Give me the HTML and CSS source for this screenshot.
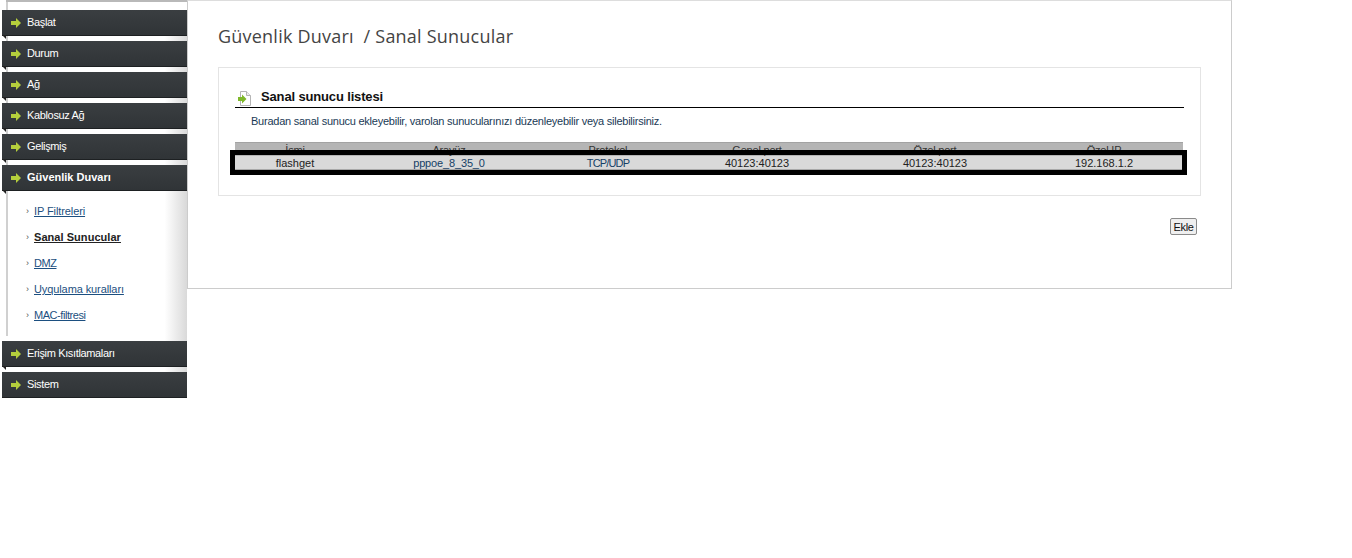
FILE: index.html
```html
<!DOCTYPE html>
<html lang="tr">
<head>
  <meta charset="UTF-8" />
  <title>Sanal Sunucular</title>
  <link rel="stylesheet" href="styles.css">
</head>
<body>
  <div class="sidebar">
    <ul class="menu">
      <li class="menu-item"><a href="#">Başlat</a></li>
      <li class="menu-item"><a href="#">Durum</a></li>
      <li class="menu-item"><a href="#">Ağ</a></li>
      <li class="menu-item"><a href="#">Kablosuz Ağ</a></li>
      <li class="menu-item"><a href="#">Gelişmiş</a></li>
      <li class="menu-item active"><a href="#">Güvenlik Duvarı</a></li>
    </ul>
    <ul class="submenu">
      <li><a href="#">IP Filtreleri</a></li>
      <li class="current"><a href="#">Sanal Sunucular</a></li>
      <li class="tight"><a href="#">DMZ</a></li>
      <li><a href="#">Uyqulama kuralları</a></li>
      <li class="tight"><a href="#">MAC-filtresi</a></li>
    </ul>
    <ul class="menu">
      <li class="menu-item"><a href="#">Erişim Kısıtlamaları</a></li>
      <li class="menu-item"><a href="#">Sistem</a></li>
    </ul>
  </div>

  <div class="main">
    <h1 class="page-title">Güvenlik Duvarı &nbsp;/ Sanal Sunucular</h1>

    <div class="box">
      <div class="box-head">
        <svg class="page-icon" width="13" height="15" viewBox="0 0 13 15">
          <path d="M2.500 .5H8.500L12.500 4.500V14.500H2.500Z" fill="#fff" stroke="#b5b5b5"/>
          <path d="M8.500 .5V4.500H12.500" fill="#eee" stroke="#b5b5b5"/>
          <path d="M0 6H4V3.500L8.500 8L4 12.500V10H0Z" fill="#7fb82a"/>
        </svg>
        <h2>Sanal sunucu listesi</h2>
      </div>
      <p class="box-desc">Buradan sanal sunucu ekleyebilir, varolan sunucularınızı düzenleyebilir veya silebilirsiniz.</p>

      <div class="table-wrap">
        <div class="row row-head">
          <div>İsmi</div>
          <div>Arayüz</div>
          <div>Protokol</div>
          <div>Genel port</div>
          <div>Özel port</div>
          <div>Özel IP</div>
        </div>
        <div class="row row-data">
          <div>flashget</div>
          <div class="blue">pppoe_8_35_0</div>
          <div class="blue narrow">TCP/UDP</div>
          <div>40123:40123</div>
          <div>40123:40123</div>
          <div>192.168.1.2</div>
        </div>
        <div class="highlight"></div>
      </div>
    </div>

    <div class="actions">
      <button type="button">Ekle</button>
    </div>
  </div>
</body>
</html>
```

FILE: styles.css
```css
body {
  margin: 0;
  display: flex;
  align-items: flex-start;
  background: #fff;
  font-family: "Liberation Sans", Arial, sans-serif;
  font-size: 11px;
  color: #222;
}

ul {
  list-style: none;
  margin: 0;
  padding: 0;
}

.sidebar {
  width: 187px;
  flex: none;
  padding-top: 10px;
  background:
    linear-gradient(#b9b9b9, #b9b9b9) 6px 0 / 181px 2px no-repeat,
    linear-gradient(#d0d0d0, #d0d0d0) 6px 0 / 2px 336px no-repeat,
    linear-gradient(to right, rgba(255,255,255,0) 88%, #d9d9d9) 0 10px / 100% 100% no-repeat;
}

.menu-item {
  position: relative;
  height: 26px;
  margin: 0 0 5px 2px;
  background: linear-gradient(#3a3e41, #303437);
  border-bottom: 1px solid #1d2022;
  box-sizing: border-box;
}

.menu-item:last-child {
  margin-bottom: 0;
}

/* little fold under the left end of the bar */
.menu-item::after {
  content: "";
  position: absolute;
  left: 0;
  top: 25px;
  border-top: 4px solid #222;
  border-left: 4px solid transparent;
}

.menu-item a {
  display: flex;
  align-items: center;
  height: 24px;
  padding-left: 25px;
  color: #fff;
  text-decoration: none;
  letter-spacing: -.35px;
  position: relative;
}

.menu-item a::before {
  content: "";
  position: absolute;
  left: 9px;
  top: 11px;
  width: 5px;
  height: 4px;
  background: #b5cf3c;
}

.menu-item a::after {
  content: "";
  position: absolute;
  left: 14px;
  top: 8px;
  border-left: 5px solid #b5cf3c;
  border-top: 5px solid transparent;
  border-bottom: 5px solid transparent;
}

.menu-item.active a {
  font-weight: bold;
  letter-spacing: 0;
}

.submenu {
  padding: 7px 0 13px 26px;
}

.submenu li {
  height: 26px;
  line-height: 26px;
  padding-left: 8px;
  position: relative;
  letter-spacing: -.1px;
}

.submenu li::before {
  content: "›";
  position: absolute;
  left: 0;
  top: 0;
  font-size: 9px;
  color: #555;
}

.submenu a {
  color: #1c4f80;
}

.submenu .tight {
  letter-spacing: -.45px;
}

.submenu .current {
  letter-spacing: .05px;
}

.submenu .current a {
  color: #222;
  font-weight: bold;
}

.main {
  width: 1045px;
  height: 289px;
  box-sizing: border-box;
  flex: none;
  border: 1px solid #ccc;
  border-top-color: #ddd;
  padding: 0 30px;
}

.page-title {
  margin: 23px 0 19px;
  font-family: "Open Sans", sans-serif;
  font-size: 18px;
  line-height: 24px;
  font-weight: 400;
  letter-spacing: .22px;
  color: #444;
}

.box {
  width: 983px;
  height: 129px;
  box-sizing: border-box;
  border: 1px solid #e4e4e4;
  padding: 23px 16px 0;
}

.box-head {
  display: flex;
  align-items: flex-start;
  width: 949px;
  height: 17px;
  padding-left: 3px;
  box-sizing: border-box;
  border-bottom: 1px solid #000;
  gap: 10px;
}

.box-head h2 {
  margin: 0;
  font-size: 13px;
  line-height: 12px;
  font-weight: bold;
  letter-spacing: -.15px;
  color: #111;
}

.box-desc {
  margin: 6px 0 0 16px;
  line-height: 14px;
  letter-spacing: -.24px;
  color: #1a3a55;
}

.table-wrap {
  position: relative;
  width: 948px;
  margin-top: 14px;
}

.row {
  display: grid;
  grid-template-columns: 120px 188px 130px 168px 188px 154px;
  text-align: center;
}

.row > div:last-child {
  padding-right: 4px;
}

.row-head {
  height: 14px;
  line-height: 15px;
  background: #b5b5b5;
  border-top: 1px solid #a3a3a3;
  box-sizing: border-box;
  letter-spacing: -.2px;
  color: #333;
}

.row-data {
  height: 14px;
  line-height: 14px;
  background: #d9d9d9;
  border-bottom: 1px solid #a8a8a8;
  box-sizing: border-box;
  color: #222;
}

.blue {
  color: #163f66;
  letter-spacing: -.15px;
}

.narrow {
  letter-spacing: -.85px;
}

/* thick marker drawn over the row */
.highlight {
  position: absolute;
  left: -5px;
  top: 8px;
  width: 947px;
  height: 15px;
  border: 5px solid #000;
}

.actions {
  width: 979px;
  display: flex;
  justify-content: flex-end;
  margin-top: 22px;
}

button {
  width: 27px;
  height: 17px;
  padding: 0;
  font-family: inherit;
  font-size: 11px;
  letter-spacing: -.3px;
  color: #111;
  background: #efefef;
  border: 1px solid #8a8a8a;
  border-radius: 2px;
}
```
